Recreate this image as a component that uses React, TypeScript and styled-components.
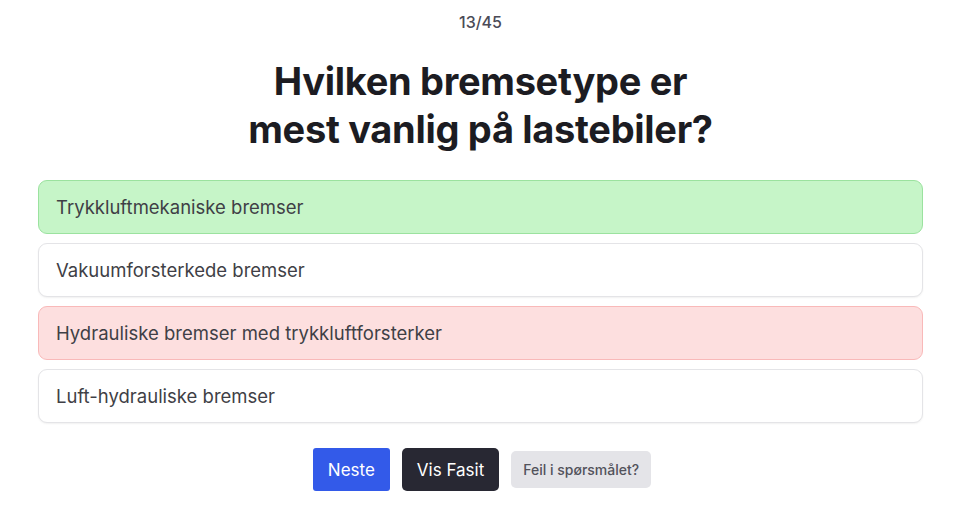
import React from 'react'
import styled, { createGlobalStyle } from 'styled-components'

const GlobalStyle = createGlobalStyle`
  * { box-sizing: border-box; }
  body {
    margin: 0;
    background: #ffffff;
    font-family: Inter, 'Noto Sans', sans-serif;
  }
`

type Status = 'correct' | 'wrong' | 'neutral'

const optionColors: Record<Status, { bg: string; border: string; shadow: string }> = {
  correct: { bg: '#c6f5c8', border: '#9be29f', shadow: 'none' },
  wrong: { bg: '#fddfdf', border: '#f9b9b9', shadow: 'none' },
  neutral: { bg: '#ffffff', border: '#e4e4e7', shadow: '0 1px 2px rgba(0, 0, 0, 0.06)' },
}

const S = {
  Page: styled.main`
    display: flex;
    flex-direction: column;
    align-items: center;
    padding: 12px 33px 0 38px;
  `,
  Counter: styled.div`
    font-size: 16px;
    line-height: 20px;
    font-weight: 500;
    color: #4b4b57;
  `,
  Title: styled.h1`
    margin: 25px 0 0;
    font-size: 38px;
    line-height: 48px;
    font-weight: 700;
    color: #1c1c22;
    text-align: center;
    letter-spacing: -0.3px;
  `,
  OptionList: styled.ul`
    list-style: none;
    margin: 27px 0 0;
    padding: 0;
    width: 100%;
    display: flex;
    flex-direction: column;
    gap: 9px;
  `,
  Option: styled.li<{ $status: Status }>`
    height: 54px;
    display: flex;
    align-items: center;
    padding: 0 17px;
    border-radius: 9px;
    font-size: 18.5px;
    color: #3f3f46;
    background: ${({ $status }) => optionColors[$status].bg};
    border: 1px solid ${({ $status }) => optionColors[$status].border};
    box-shadow: ${({ $status }) => optionColors[$status].shadow};
  `,
  Actions: styled.div`
    margin-top: 25px;
    display: flex;
    align-items: center;
    gap: 12px;
    padding-left: 3px;
  `,
  Button: styled.button<{ $variant: 'primary' | 'dark' | 'muted' }>`
    border: none;
    font-family: inherit;
    cursor: pointer;
    height: ${({ $variant }) => ($variant === 'muted' ? '37px' : '43px')};
    padding: ${({ $variant }) => ($variant === 'muted' ? '0 12px' : '0 15px')};
    border-radius: ${({ $variant }) => ($variant === 'primary' ? '3px' : '5px')};
    font-size: ${({ $variant }) => ($variant === 'muted' ? '14px' : '17px')};
    font-weight: ${({ $variant }) => ($variant === 'muted' ? 500 : 400)};
    color: ${({ $variant }) => ($variant === 'muted' ? '#52525b' : '#ffffff')};
    background: ${({ $variant }) =>
      $variant === 'primary' ? '#335ae9' : $variant === 'dark' ? '#282833' : '#e4e4e8'};
  `,
}

const options: { text: string; status: Status }[] = [
  { text: 'Trykkluftmekaniske bremser', status: 'correct' },
  { text: 'Vakuumforsterkede bremser', status: 'neutral' },
  { text: 'Hydrauliske bremser med trykkluftforsterker', status: 'wrong' },
  { text: 'Luft-hydrauliske bremser', status: 'neutral' },
]

export default function App() {
  return (
    <>
      <GlobalStyle />
      <S.Page>
        <S.Counter>13/45</S.Counter>
        <S.Title>
          Hvilken bremsetype er
          <br />
          mest vanlig på lastebiler?
        </S.Title>
        <S.OptionList>
          {options.map((o) => (
            <S.Option key={o.text} $status={o.status}>
              {o.text}
            </S.Option>
          ))}
        </S.OptionList>
        <S.Actions>
          <S.Button $variant="primary">Neste</S.Button>
          <S.Button $variant="dark">Vis Fasit</S.Button>
          <S.Button $variant="muted">Feil i spørsmålet?</S.Button>
        </S.Actions>
      </S.Page>
    </>
  )
}
